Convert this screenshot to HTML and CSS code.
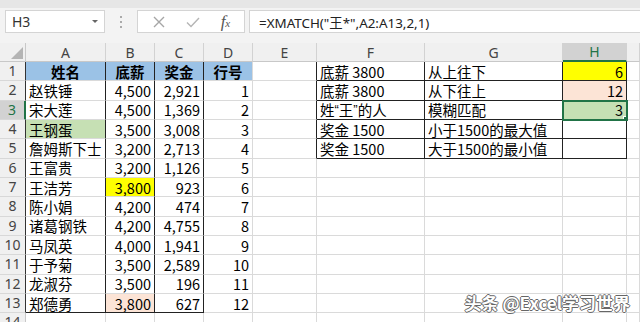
FILE: index.html
```html
<!DOCTYPE html>
<html>
<head>
  <title>XMATCH</title>
  <link rel="stylesheet" href="styles.css">
</head>
<body>
  <div class="app">
    <div class="topstrip"></div>
    <div class="formula-bar">
      <div class="name-box">
        <span>H3</span>
        <svg class="caret" width="8" height="5" viewBox="0 0 8 5"><path d="M1 1 L4 4 L7 1" fill="#666"/></svg>
      </div>
      <div class="grip"><i></i><i></i><i></i></div>
      <div class="fx-buttons">
        <svg width="14" height="14" viewBox="0 0 14 14"><path d="M2 2 L12 12 M12 2 L2 12" stroke="#a6a6a6" stroke-width="1.4"/></svg>
        <svg width="16" height="14" viewBox="0 0 16 14"><path d="M2 7.5 L6 11.5 L14 3" stroke="#b5b5b5" stroke-width="1.4" fill="none"/></svg>
        <span class="fx">f<small>x</small></span>
      </div>
      <div class="formula-input">=XMATCH("王*",A2:A13,2,1)</div>
    </div>

    <div class="sheet">
      <!-- column headers -->
      <div class="corner"><svg width="12" height="12" viewBox="0 0 12 12"><path d="M12 0 L12 12 L0 12 Z" fill="#b4b4b4"/></svg></div>
      <div class="ch">A</div>
      <div class="ch">B</div>
      <div class="ch">C</div>
      <div class="ch">D</div>
      <div class="ch">E</div>
      <div class="ch">F</div>
      <div class="ch">G</div>
      <div class="ch sel">H</div>
      <div class="ch"></div>

      <!-- row 1 -->
      <div class="rh dk">1</div>
      <div class="c hd bR">姓名</div>
      <div class="c hd bR">底薪</div>
      <div class="c hd bR">奖金</div>
      <div class="c hd">行号</div>
      <div class="c bR"></div>
      <div class="c t bR bB">底薪 3800</div>
      <div class="c t bR bB">从上往下</div>
      <div class="c n bR bB yellow">6</div>
      <div class="c"></div>

      <!-- row 2 -->
      <div class="rh dk">2</div>
      <div class="c t bR">赵铁锤</div>
      <div class="c n bR">4,500</div>
      <div class="c n bR">2,921</div>
      <div class="c n">1</div>
      <div class="c bR"></div>
      <div class="c t bR bB">底薪 3800</div>
      <div class="c t bR bB">从下往上</div>
      <div class="c n bR bB peach">12</div>
      <div class="c"></div>

      <!-- row 3 -->
      <div class="rh sel">3</div>
      <div class="c t bR">宋大莲</div>
      <div class="c n bR">4,500</div>
      <div class="c n bR">1,369</div>
      <div class="c n">2</div>
      <div class="c bR"></div>
      <div class="c t bR bB">姓<span class="q">“</span>王<span class="q">”</span>的人</div>
      <div class="c t bR bB">模糊匹配</div>
      <div class="c n bR bB green active">3</div>
      <div class="c"></div>

      <!-- row 4 -->
      <div class="rh dk">4</div>
      <div class="c t bR green">王钢蛋</div>
      <div class="c n bR">3,500</div>
      <div class="c n bR">3,008</div>
      <div class="c n">3</div>
      <div class="c bR"></div>
      <div class="c t bR bB">奖金 1500</div>
      <div class="c t bR bB">小于1500的最大值</div>
      <div class="c n bR bB"></div>
      <div class="c"></div>

      <!-- row 5 -->
      <div class="rh dk">5</div>
      <div class="c t bR">詹姆斯下士</div>
      <div class="c n bR">3,200</div>
      <div class="c n bR">2,713</div>
      <div class="c n">4</div>
      <div class="c bR"></div>
      <div class="c t bR bB">奖金 1500</div>
      <div class="c t bR bB">大于1500的最小值</div>
      <div class="c n bR bB"></div>
      <div class="c"></div>

      <!-- row 6 -->
      <div class="rh dk">6</div>
      <div class="c t bR">王富贵</div>
      <div class="c n bR">3,200</div>
      <div class="c n bR">1,126</div>
      <div class="c n">5</div>
      <div class="c"></div><div class="c"></div><div class="c"></div><div class="c"></div><div class="c"></div>

      <!-- row 7 -->
      <div class="rh dk">7</div>
      <div class="c t bR">王洁芳</div>
      <div class="c n bR yellow">3,800</div>
      <div class="c n bR">923</div>
      <div class="c n">6</div>
      <div class="c"></div><div class="c"></div><div class="c"></div><div class="c"></div><div class="c"></div>

      <!-- row 8 -->
      <div class="rh dk">8</div>
      <div class="c t bR">陈小娟</div>
      <div class="c n bR">4,200</div>
      <div class="c n bR">474</div>
      <div class="c n">7</div>
      <div class="c"></div><div class="c"></div><div class="c"></div><div class="c"></div><div class="c"></div>

      <!-- row 9 -->
      <div class="rh dk">9</div>
      <div class="c t bR">诸葛钢铁</div>
      <div class="c n bR">4,200</div>
      <div class="c n bR">4,755</div>
      <div class="c n">8</div>
      <div class="c"></div><div class="c"></div><div class="c"></div><div class="c"></div><div class="c"></div>

      <!-- row 10 -->
      <div class="rh dk">10</div>
      <div class="c t bR">马凤英</div>
      <div class="c n bR">4,000</div>
      <div class="c n bR">1,941</div>
      <div class="c n">9</div>
      <div class="c"></div><div class="c"></div><div class="c"></div><div class="c"></div><div class="c"></div>

      <!-- row 11 -->
      <div class="rh dk">11</div>
      <div class="c t bR">于予菊</div>
      <div class="c n bR">3,500</div>
      <div class="c n bR">2,589</div>
      <div class="c n">10</div>
      <div class="c"></div><div class="c"></div><div class="c"></div><div class="c"></div><div class="c"></div>

      <!-- row 12 -->
      <div class="rh dk">12</div>
      <div class="c t bR">龙淑芬</div>
      <div class="c n bR">3,500</div>
      <div class="c n bR">196</div>
      <div class="c n">11</div>
      <div class="c"></div><div class="c"></div><div class="c"></div><div class="c"></div><div class="c"></div>

      <!-- row 13 -->
      <div class="rh dk">13</div>
      <div class="c t bR bB">郑德勇</div>
      <div class="c n bR bB peach">3,800</div>
      <div class="c n bR bB">627</div>
      <div class="c n">12</div>
      <div class="c"></div><div class="c"></div><div class="c"></div><div class="c"></div><div class="c"></div>

      <!-- row 14 -->
      <div class="rh">14</div>
      <div class="c"></div><div class="c"></div><div class="c"></div><div class="c"></div><div class="c"></div>
      <div class="c"></div><div class="c"></div><div class="c"></div><div class="c"></div>
    </div>

    <div class="watermark">头条 @Excel学习世界</div>
  </div>
</body>
</html>
```

FILE: styles.css
```css
body {
  margin: 0;
  background: #ffffff;
  font-family: "Noto Sans", "Noto Sans CJK SC", sans-serif;
}

.app {
  position: relative;
  width: 640px;
  height: 322px;
  overflow: hidden;
}

.topstrip {
  height: 8px;
  background: #e6e6e6;
}

.formula-bar {
  height: 35px;
  background: #f3f3f3;
  display: flex;
  align-items: flex-start;
  padding-top: 2px;
  box-sizing: border-box;
}

.name-box {
  margin-left: 5px;
  width: 100px;
  height: 23px;
  box-sizing: border-box;
  background: #fff;
  border: 1px solid #d4d4d4;
  display: flex;
  align-items: center;
  justify-content: space-between;
  padding: 0 5px 0 6px;
  font-size: 14px;
  color: #333;
}

.grip {
  width: 32px;
  height: 23px;
  display: flex;
  flex-direction: column;
  align-items: center;
  justify-content: center;
  gap: 3px;
}

.grip i {
  width: 2px;
  height: 2px;
  background: #aaa;
}

.fx-buttons {
  width: 108px;
  height: 23px;
  box-sizing: border-box;
  background: #fff;
  border: 1px solid #d4d4d4;
  display: flex;
  align-items: center;
  justify-content: space-around;
  padding: 0 4px;
}

.fx {
  font-family: "Liberation Serif", serif;
  font-style: italic;
  font-size: 17px;
  color: #555;
}

.fx small {
  font-size: 11px;
}

.formula-input {
  margin-left: 4px;
  flex: 1;
  height: 23px;
  box-sizing: border-box;
  background: #fff;
  border: 1px solid #d4d4d4;
  border-right: none;
  padding-left: 9px;
  font-size: 13.4px;
  color: #222;
  display: flex;
  align-items: center;
}

.sheet {
  display: grid;
  grid-template-columns: 26px 80px 49px 49px 49px 64px 108px 138px 64px 13px;
  grid-template-rows: 19px repeat(13, 19.33px) 20px;
}

.corner {
  background: #f0f0f0;
  border-right: 1px solid #c8c8c8;
  border-bottom: 1px solid #c8c8c8;
  display: flex;
  align-items: flex-end;
  justify-content: flex-end;
  padding: 0 2px 2px 0;
}

.ch {
  background: #f0f0f0;
  border-right: 1px solid #d2d2d2;
  border-bottom: 1px solid #c8c8c8;
  display: flex;
  align-items: center;
  justify-content: center;
  font-size: 14px;
  color: #444;
}

.ch.sel {
  background: #d2d2d2;
  color: #217346;
  border-bottom: 2px solid #217346;
}

.rh {
  background: #f0f0f0;
  border-right: 1px solid #c8c8c8;
  border-bottom: 1px solid #d8d8d8;
  display: flex;
  align-items: flex-start;
  justify-content: center;
  font-size: 14px;
  line-height: 18px;
  color: #444;
}

.rh.dk {
  border-right-color: #333;
}

.rh.sel {
  background: #d2d2d2;
  color: #217346;
  border-right: 2px solid #217346;
}

.c {
  border-right: 1px solid #dadada;
  border-bottom: 1px solid #dadada;
  display: flex;
  align-items: center;
  overflow: hidden;
  white-space: nowrap;
  font-family: "Noto Sans CJK SC", sans-serif;
  font-size: 14.5px;
  color: #000;
  padding: 0 3px;
}

.c.t {
  justify-content: flex-start;
}

.c.n {
  justify-content: flex-end;
}

.c.hd {
  background: #9bc2e6;
  justify-content: center;
  font-weight: bold;
}

.c.bR {
  border-right-color: #222;
}

.c.bB {
  border-bottom-color: #222;
}

.q {
  font-family: "Liberation Sans", sans-serif;
  font-size: 13px;
}

.yellow {
  background: #ffff00;
}

.peach {
  background: #fce4d6;
}

.green {
  background: #c6e0b4;
}

.c.active {
  position: relative;
  outline: 2px solid #217346;
  outline-offset: -1px;
}

.c.active::after {
  content: "";
  position: absolute;
  right: -4px;
  bottom: -4px;
  width: 5px;
  height: 5px;
  background: #217346;
  border: 1px solid #fff;
}

.watermark {
  position: absolute;
  right: 10px;
  bottom: 7px;
  font-family: "Noto Sans CJK SC", sans-serif;
  font-size: 17px;
  font-weight: bold;
  color: #fff;
  text-shadow: 1px 0 0 #666, -1px 0 0 #666, 0 1px 0 #666, 0 -1px 0 #666;
}
```
